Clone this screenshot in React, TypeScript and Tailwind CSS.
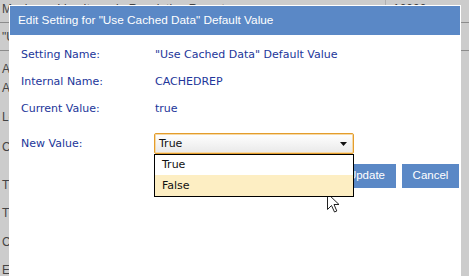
import React from 'react'

const bgRows = [
  { h: 'h-[19px]', label: 'Allow Anonymous Access' },
  { h: 'h-[29px]', label: 'Auto Refresh Interval' },
  { h: 'h-[30px]', label: 'Log Retention Days' },
  { h: 'h-[38px]', label: 'Cache Timeout' },
  { h: 'h-[28px]', label: 'Time Zone Offset' },
  { h: 'h-[29px]', label: 'Trace Enabled' },
  { h: 'h-[28px]', label: 'Currency Code' },
  { h: 'h-[16px]', label: 'Email Server Address' },
]

const fields = [
  { label: 'Setting Name:', value: '"Use Cached Data" Default Value', h: 'h-[27px]' },
  { label: 'Internal Name:', value: 'CACHEDREP', h: 'h-[27px]' },
  { label: 'Current Value:', value: 'true', h: 'h-[32px]' },
]

function Cursor() {
  return (
    <svg
      className="absolute left-[327px] top-[193px]"
      width="13"
      height="20"
      viewBox="0 0 13 20"
    >
      <path
        d="M0.5 0.5 L0.5 16.5 L4.5 12.5 L7.5 19 L9.8 18 L7 11.5 L12 11.5 Z"
        fill="#fff"
        stroke="#222"
        strokeWidth="1"
        strokeLinejoin="miter"
      />
    </svg>
  )
}

export default function App() {
  return (
    <div className="relative w-[469px] h-[276px] overflow-hidden bg-[#cccccc] font-['Liberation_Sans',Arial,sans-serif]">
      {/* settings table behind the dialog */}
      <div className="flex flex-col text-[12px] leading-[16px] text-[#444]">
        <div className="flex h-[23px] border-b border-[#8c8c8c]">
          <div className="w-[385px] pl-[2px] pt-px whitespace-nowrap">Maximum Line Items in Resolution Report</div>
          <div className="flex-1 border-l border-[#b0b0b0] pl-[7px] pt-px">10000</div>
        </div>
        <div className="h-[28px] border-b border-[#8c8c8c] pl-[2px] pt-[6px] whitespace-nowrap">"Use Cached Data" Default Value</div>
        <div className="flex flex-col pt-[10px]">
          {bgRows.map((r) => (
            <div key={r.label} className={`${r.h} pl-[2px] whitespace-nowrap`}>
              {r.label}
            </div>
          ))}
        </div>
      </div>

      {/* edit dialog */}
      <div className="absolute left-[9px] top-[5px] w-[452px] h-[280px] bg-white p-px">
        <div className="flex h-[29px] items-center bg-[#5a88c6] pl-[8px] text-[11.8px] text-white whitespace-nowrap">
          Edit Setting for "Use Cached Data" Default Value
        </div>

        <div className="relative pl-[11px] pt-[12px] font-['DejaVu_Sans',sans-serif] text-[11px] leading-[16px] text-[#22369a]">
          {fields.map((f) => (
            <div key={f.label} className={`flex ${f.h}`}>
              <div className="w-[133px]">{f.label}</div>
              <div className="pl-px whitespace-nowrap">{f.value}</div>
            </div>
          ))}

          <div className="flex">
            <div className="w-[133px] pt-[3px]">New Value:</div>
            <div className="relative">
              <div className="flex h-[21px] w-[200px] items-center justify-between rounded-[2px] border border-[#e49d2c] bg-gradient-to-b from-white to-[#e9e9e9] pl-[4px] pr-[6px] text-[#111] shadow-[inset_0_0_0_1px_#f6d9a6]">
                <span>True</span>
                <svg width="7" height="4" viewBox="0 0 7 4">
                  <path d="M0 0 H7 L3.5 4 Z" fill="#111" />
                </svg>
              </div>

              {/* open list */}
              <div className="absolute left-0 top-full z-10 w-[200px] border border-black bg-white text-[#111]">
                <div className="flex h-[20px] items-center pl-[7px]">True</div>
                <div className="flex h-[21px] items-center bg-[#fdeec3] pl-[7px]">False</div>
              </div>
            </div>
          </div>
        </div>

        <div className="mt-[10px] flex justify-end gap-[6px] pr-px text-[11.5px] text-white">
          <button className="h-[24px] bg-[#5a88c6] px-[11px]">Update</button>
          <button className="h-[24px] w-[57px] bg-[#5a88c6]">Cancel</button>
        </div>
      </div>

      <Cursor />
    </div>
  )
}
